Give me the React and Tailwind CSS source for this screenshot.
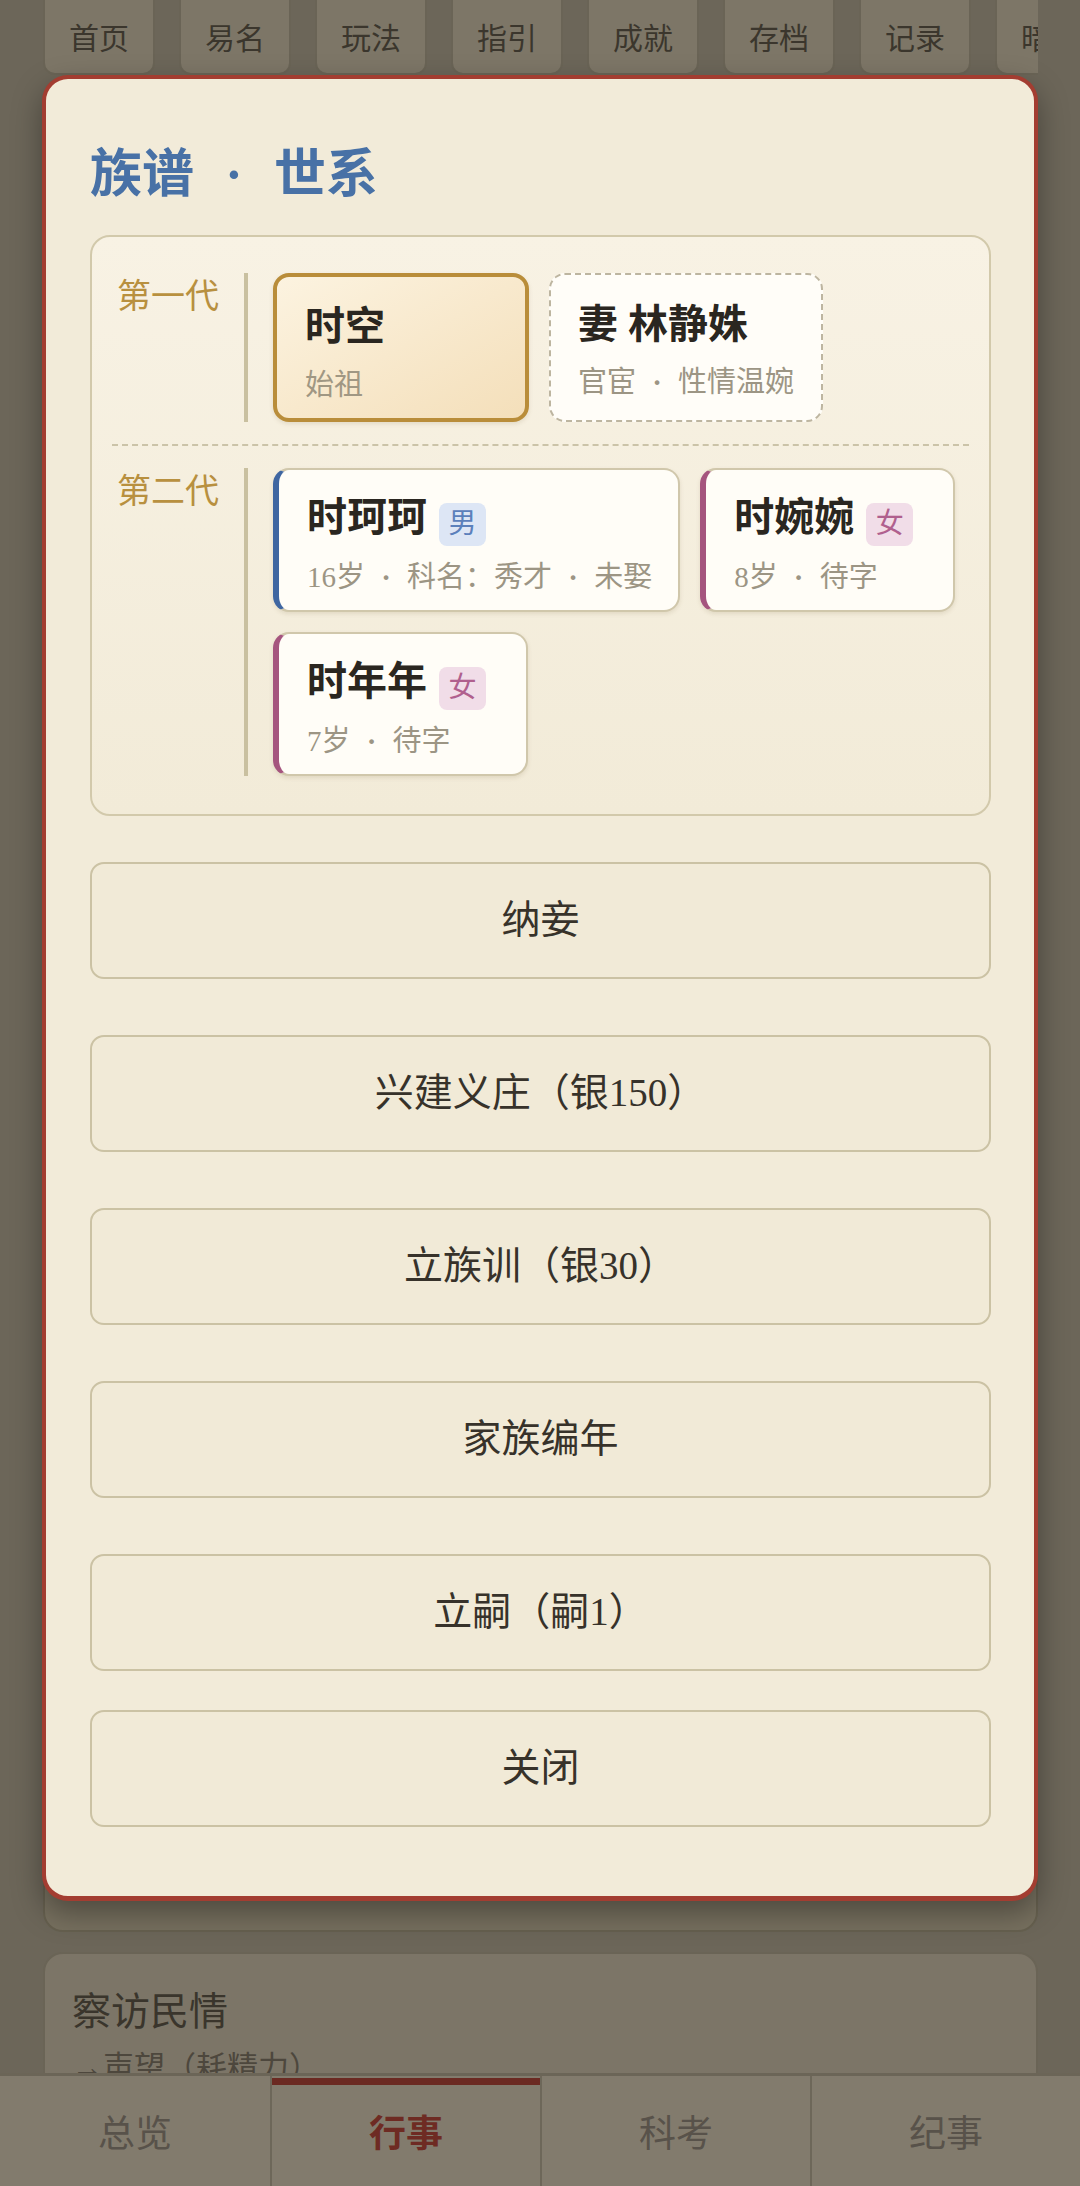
import React from "react";

const Dot = ({ w = "w-[1.45em]" }) => (
  <span className={`inline-block ${w} text-center font-bold`}>·</span>
);

function Badge({ g }) {
  const male = g === "男";
  return (
    <span
      className={`ml-[12px] mt-[12px] inline-flex h-[43px] w-[47px] items-center justify-center rounded-[8px] text-[28px] ${
        male ? "bg-[#dde6f5] text-[#5b80bb]" : "bg-[#f1dde8] text-[#b0608e]"
      }`}
    >
      {g}
    </span>
  );
}

function ChildCard({ name, g, sub }) {
  const male = g === "男";
  return (
    <div
      className={`min-w-[255px] rounded-[16px] border-2 border-l-[6px] border-[#d0c7ab] bg-[#fffdf7] pl-[28px] pr-[26px] pt-[24px] pb-[13px] shadow-[0_2px_4px_rgba(120,100,60,0.15)] ${
        male ? "border-l-[#3f66a1]" : "border-l-[#a5557e]"
      }`}
    >
      <div className="flex h-[48px] items-center">
        <span className="text-[40px] font-bold leading-[48px] text-[#2a2620]">{name}</span>
        <Badge g={g} />
      </div>
      <div className="mt-[15px] whitespace-nowrap text-[29px] leading-[40px] text-[#9c9584]">{sub}</div>
    </div>
  );
}

export default function App() {
  const tabs = ["首页", "易名", "玩法", "指引", "成就", "存档", "记录", "暗访"];
  const buttons = ["纳妾", "兴建义庄（银150）", "立族训（银30）", "家族编年", "立嗣（嗣1）"];
  const nav = ["总览", "行事", "科考", "纪事"];
  return (
    <div className="relative h-[2186px] w-[1080px] overflow-hidden bg-[#6c6659] font-['Liberation_Serif','Noto_Sans_CJK_SC',serif]">
      {/* underlying page */}
      <div className="ml-[43px] w-[995px]">
        <div className="-mt-[14px] flex gap-[24px] overflow-hidden">
          {tabs.map((t) => (
            <div
              key={t}
              className="flex h-[89px] w-[112px] shrink-0 items-center justify-center rounded-[12px] border-2 border-[#6a6456] bg-[#7d7667] pt-[16px] text-[30px] text-[#3b362d]"
            >
              {t}
            </div>
          ))}
        </div>
        <div className="mt-[25px] h-[1832px] rounded-[20px] border-2 border-[#66604f] bg-[#77705f]" />
        <div className="mt-[20px] h-[400px] rounded-[20px] border-2 border-[#6a6456] bg-[#7c7567] px-[27px] pt-[30px]">
          <div className="text-[39px] leading-[56px] text-[#3a352c]">察访民情</div>
          <div className="mt-[6px] text-[31px] leading-[44px] text-[#4d473d]">→声望（耗精力）</div>
        </div>
      </div>

      {/* bottom nav */}
      <div className="absolute bottom-0 left-0 right-0 grid h-[113px] grid-cols-4 border-t-[3px] border-[#6b6557] bg-[#827b6d]">
        {nav.map((n, i) => (
          <div
            key={n}
            className={`relative flex items-center justify-center pt-[8px] text-[37px] ${
              i > 0 ? "border-l-2 border-[#6d6759]" : ""
            } ${i === 1 ? "font-bold text-[#6e2b23]" : "text-[#58524a]"}`}
          >
            {i === 1 && <div className="absolute left-0 right-0 top-[2px] h-[7px] bg-[#6b2a22]" />}
            {n}
          </div>
        ))}
      </div>

      {/* modal */}
      <div className="absolute left-[42px] top-[75px] w-[996px] rounded-[26px] border-4 border-b-[5px] border-[#a33d31] bg-[#f2ebd9] pb-[69px] pl-[44px] pr-[43px] pt-[64px] shadow-[0_12px_30px_rgba(0,0,0,0.35)]">
        <div className="flex text-[52px] font-bold leading-[64px] text-[#4871a6]">
          <span>族谱</span>
          <Dot w="w-[80px]" />
          <span>世系</span>
        </div>

        <div className="mt-[28px] rounded-[20px] border-2 border-[#d2c9ab] bg-gradient-to-b from-[#f8f2e4] to-[#f2ebd8] px-[20px] pb-[38px] pt-[36px]">
          {/* gen 1 */}
          <div className="flex">
            <div className="w-[132px] shrink-0 pl-[5px] text-[34px] leading-[48px] text-[#b8903f]">第一代</div>
            <div className="flex flex-1 flex-wrap gap-[20px] border-l-4 border-[#c9c0a0] pl-[25px]">
              <div className="min-w-[256px] rounded-[16px] border-4 border-[#b98d3a] bg-gradient-to-br from-[#fcf3e0] to-[#f4dfba] pl-[28px] pr-[28px] pb-[13px] pt-[26px] shadow-[0_2px_4px_rgba(120,100,60,0.15)]">
                <div className="text-[40px] font-bold leading-[48px] text-[#2a2620]">时空</div>
                <div className="mt-[14px] text-[29px] leading-[40px] text-[#a09783]">始祖</div>
              </div>
              <div className="rounded-[16px] border-2 border-dashed border-[#bdb5a0] bg-[#fffdf8] pl-[27px] pr-[27px] pb-[14px] pt-[26px]">
                <div className="text-[40px] font-bold leading-[48px] text-[#2a2620]">妻 林静姝</div>
                <div className="mt-[13px] whitespace-nowrap text-[29px] leading-[40px] text-[#9c9584]">
                  官宦<Dot />性情温婉
                </div>
              </div>
            </div>
          </div>

          <div className="my-[22px] border-t-2 border-dashed border-[#cbc3a8]" />

          {/* gen 2 */}
          <div className="flex">
            <div className="w-[132px] shrink-0 pl-[5px] text-[34px] leading-[48px] text-[#b8903f]">第二代</div>
            <div className="flex flex-1 flex-wrap gap-[20px] border-l-4 border-[#c9c0a0] pl-[25px]">
              <ChildCard
                name="时珂珂"
                g="男"
                sub={
                  <>
                    16岁<Dot />科名：秀才<Dot />未娶
                  </>
                }
              />
              <ChildCard
                name="时婉婉"
                g="女"
                sub={
                  <>
                    8岁<Dot />待字
                  </>
                }
              />
              <ChildCard
                name="时年年"
                g="女"
                sub={
                  <>
                    7岁<Dot />待字
                  </>
                }
              />
            </div>
          </div>
        </div>

        <div className="mt-[46px] flex flex-col gap-[56px]">
          {buttons.map((b) => (
            <div
              key={b}
              className="flex h-[117px] items-center justify-center rounded-[14px] border-2 border-[#cbc2a4] bg-[#f1ead7] text-[39px] text-[#37322a]"
            >
              {b}
            </div>
          ))}
        </div>
        <div className="mt-[39px] flex h-[117px] items-center justify-center rounded-[14px] border-2 border-[#cbc2a4] bg-[#f1ead7] text-[39px] text-[#37322a]">
          关闭
        </div>
      </div>
    </div>
  );
}
